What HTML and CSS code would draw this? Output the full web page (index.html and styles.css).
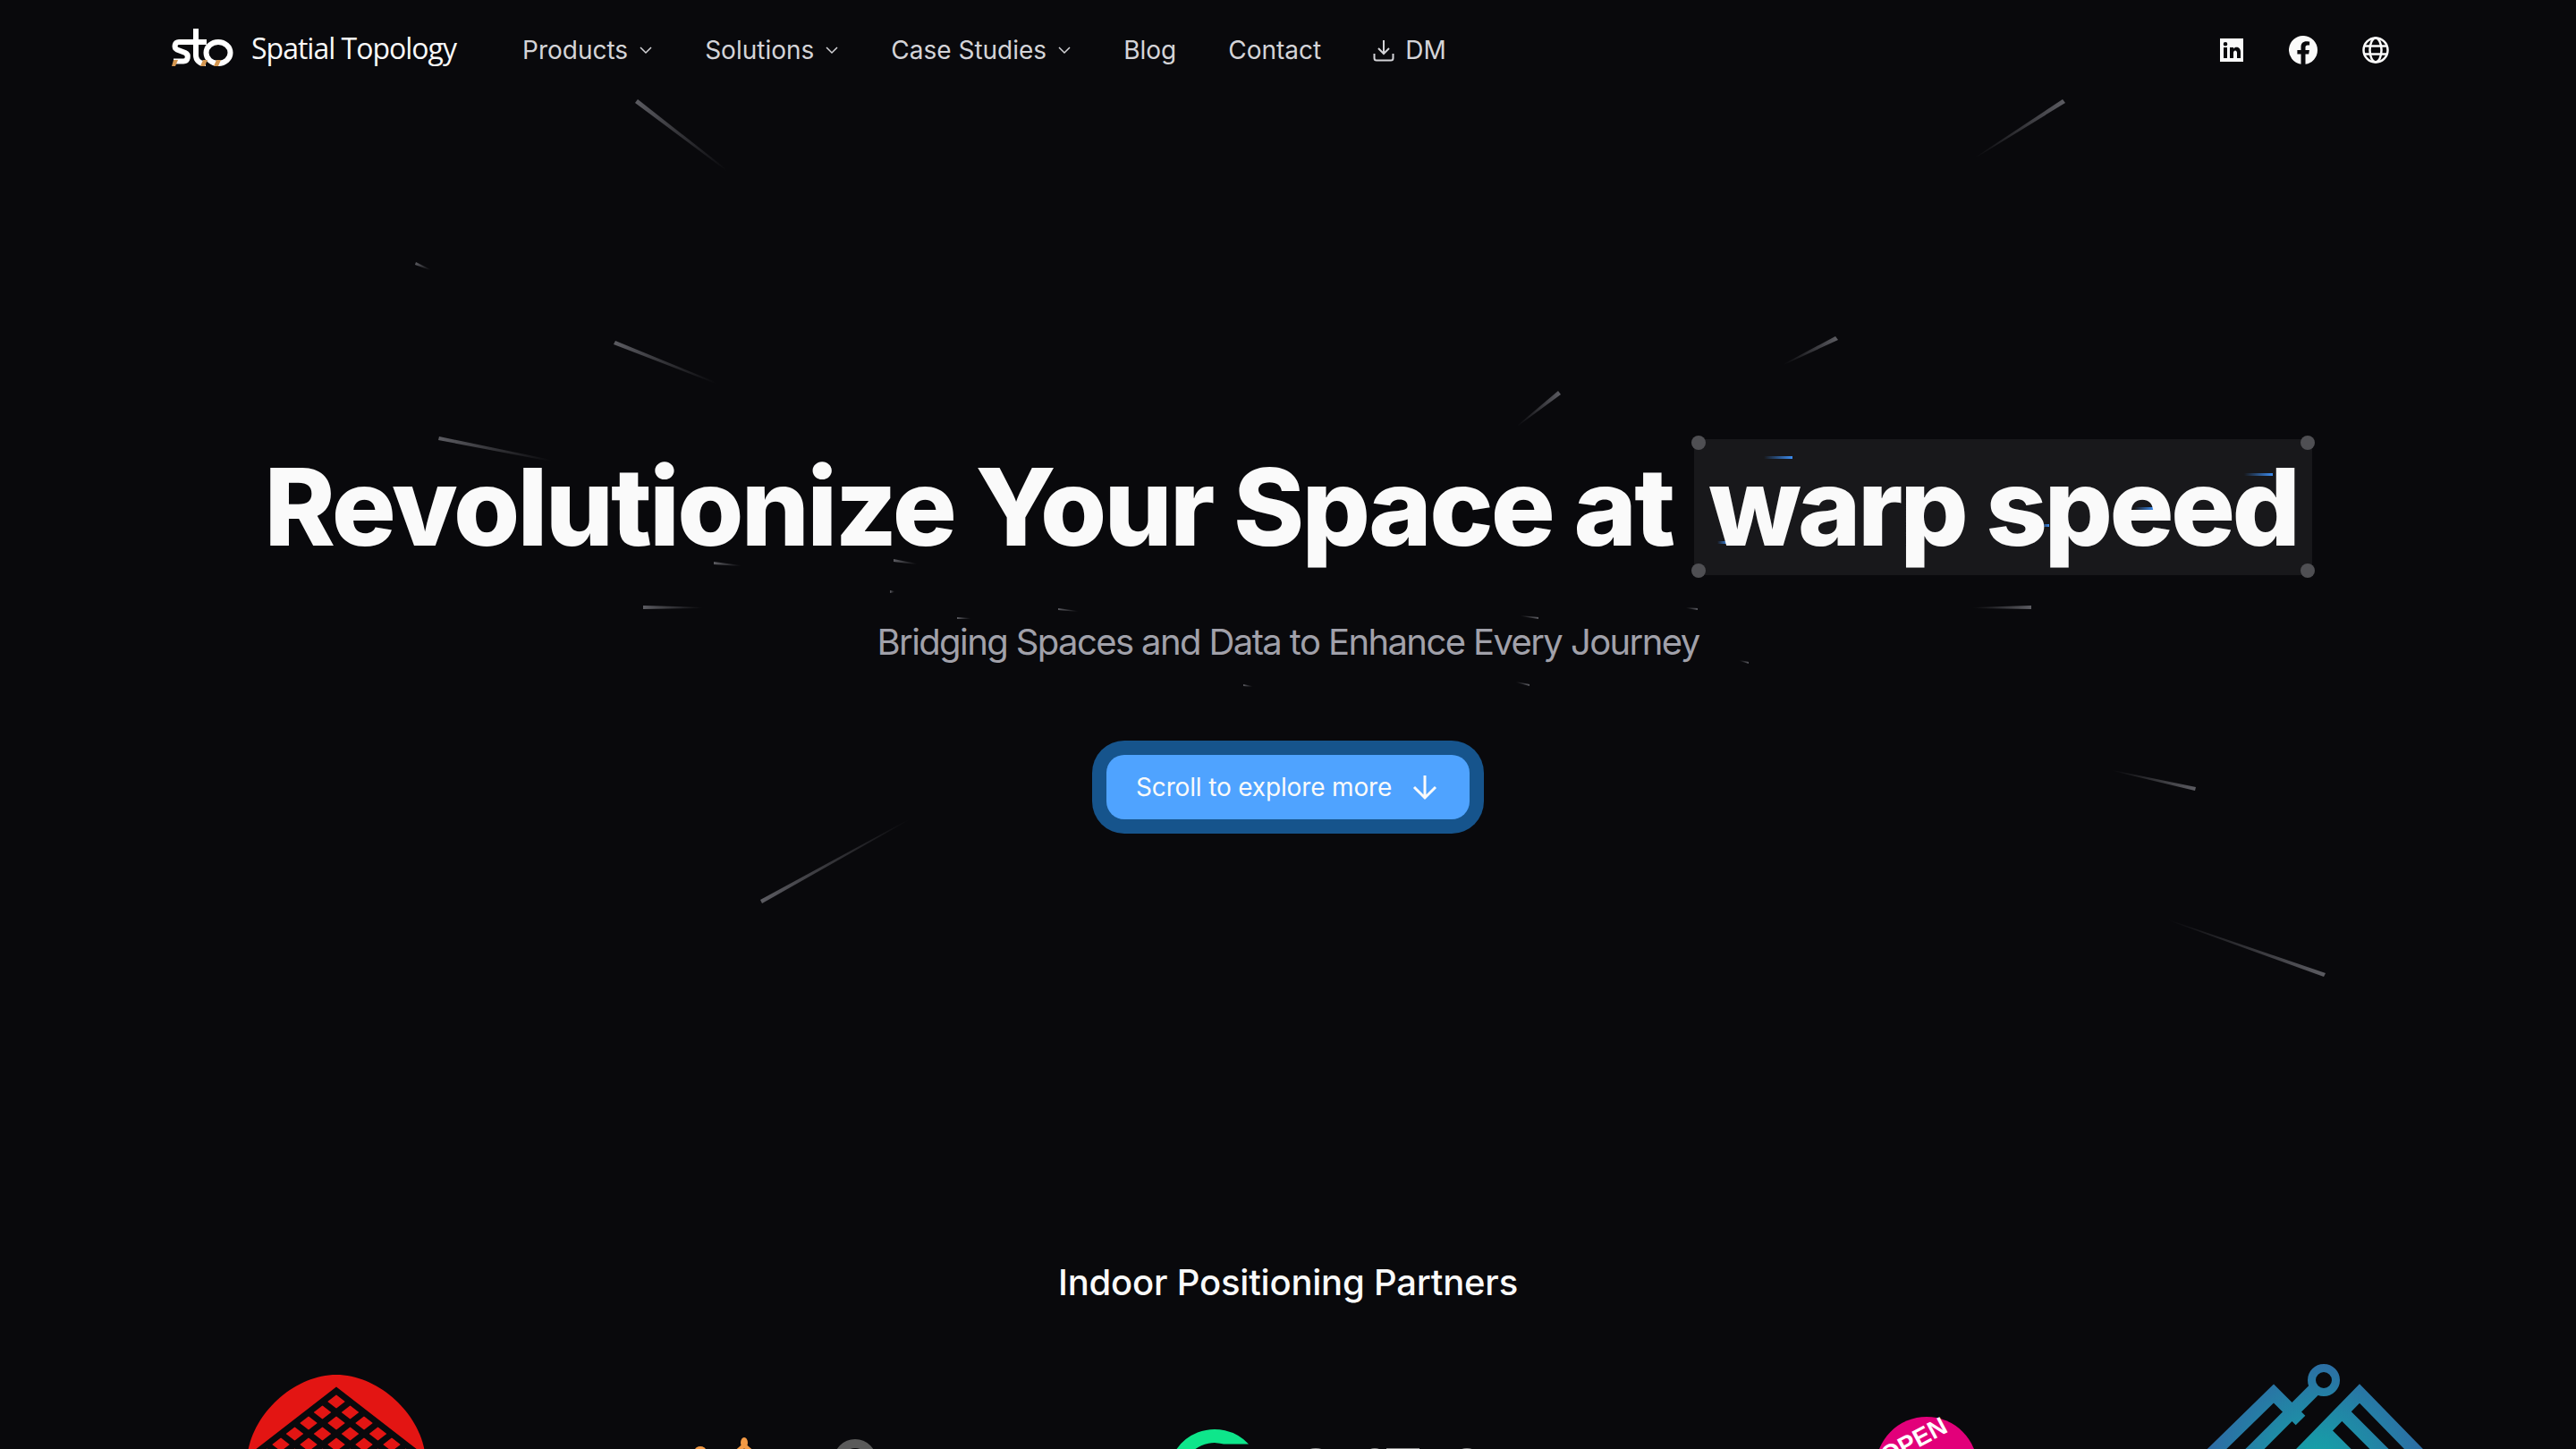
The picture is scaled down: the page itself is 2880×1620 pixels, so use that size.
FILE: index.html
```html
<!DOCTYPE html>
<html lang="en">
<head>
  <meta charset="UTF-8" />
  <meta name="viewport" content="width=device-width, initial-scale=1.0"/>
  <title>Spatial Topology</title>
  <link rel="stylesheet" href="styles.css">
</head>
<body>
  <svg class="streaks" width="2880" height="1620" viewBox="0 0 2880 1620">
    <defs>
      <linearGradient id="fadeL" x1="0" y1="0" x2="1" y2="0">
        <stop offset="0" stop-color="#5c5c62"/>
        <stop offset="1" stop-color="#5c5c62" stop-opacity="0"/>
      </linearGradient>
      <linearGradient id="fadeR" x1="1" y1="0" x2="0" y2="0">
        <stop offset="0" stop-color="#5c5c62"/>
        <stop offset="1" stop-color="#5c5c62" stop-opacity="0"/>
      </linearGradient>
      <linearGradient id="fadeBlue" x1="0" y1="0" x2="1" y2="0">
        <stop offset="0" stop-color="#3b8cf0" stop-opacity="0"/>
        <stop offset="1" stop-color="#3b8cf0"/>
      </linearGradient>
    </defs>
    <!-- left side, bright end on the left -->
    <g fill="url(#fadeL)">
      <polygon points="713,111 812,189 812,191 710,115"/>
      <polygon points="465,293 481,301 481,302 464,296"/>
      <polygon points="688,381 800,427 800,429 686,385"/>
      <polygon points="491,488 616,514 616,516 490,492"/>
      <polygon points="719,677 785,679 785,680 719,681"/>
      <polygon points="850,1006 1016,916 1016,917 852,1010"/>
      <polygon points="798,628 828,632 828,633 798,631"/>
      <polygon points="999,625 1025,630 1025,631 999,628"/>
      <polygon points="995,660 1000,661 1000,662 995,663"/>
      <polygon points="1183,680 1205,683 1205,684 1183,682"/>
      <polygon points="1390,765 1400,767 1400,768 1390,767"/>
      <polygon points="1070,690 1085,691 1085,692 1070,692"/>
    </g>
    <!-- right side, bright end on the right -->
    <g fill="url(#fadeR)">
      <polygon points="2306,111 2208,176 2208,177 2309,115"/>
      <polygon points="2052,376 1994,407 1994,408 2055,380"/>
      <polygon points="1742,437 1696,476 1696,477 1745,441"/>
      <polygon points="2271,677 2206,679 2206,680 2271,681"/>
      <polygon points="2455,880 2362,861 2362,862 2454,884"/>
      <polygon points="2600,1088 2424,1028 2424,1029 2598,1092"/>
      <polygon points="1955,740 1945,738 1945,739 1955,742"/>
      <polygon points="1710,765 1695,762 1695,763 1710,767"/>
      <polygon points="1720,690 1700,688 1700,689 1720,692"/>
      <polygon points="1898,680 1885,679 1885,680 1898,682"/>
    </g>
  </svg>

  <header class="topbar">
    <div class="nav-left">
      <a class="brand" href="#">
        <svg class="brand-mark" width="72" height="50" viewBox="0 0 72 50">
          <g fill="none" stroke="#fff" stroke-width="6">
            <path d="M23 16H10a4.500 4.500 0 0 0-2 8.500l9 3.500a5 5 0 0 1-2 9.500H4"/>
            <path d="M29 1v30a9 9 0 0 0 9 9h2M19 16h22"/>
            <ellipse cx="54" cy="28" rx="13.500" ry="12"/>
          </g>
          <path d="M4 36h5l-3 7H2zM37 36h5l-3 7h-5zM52 36h5l-3 7h-5z" fill="#d4964f"/>
        </svg>
        <span class="brand-name">Spatial Topology</span>
      </a>
      <nav class="menu">
        <a href="#">Products <svg class="chev" width="16" height="16" viewBox="0 0 16 16"><path d="M2 5l6 6 6-6"/></svg></a>
        <a href="#">Solutions <svg class="chev" width="16" height="16" viewBox="0 0 16 16"><path d="M2 5l6 6 6-6"/></svg></a>
        <a href="#">Case Studies <svg class="chev" width="16" height="16" viewBox="0 0 16 16"><path d="M2 5l6 6 6-6"/></svg></a>
        <a href="#">Blog</a>
        <a href="#">Contact</a>
        <a class="dm" href="#">
          <svg class="dl" width="24" height="26" viewBox="0 0 24 26"><path d="M12 2v15M6 11l6 6 6-6M1.500 17v5c0 1.500 1 2.500 2.500 2.500h16c1.500 0 2.500-1 2.500-2.500v-5"/></svg>
          DM
        </a>
      </nav>
    </div>
    <div class="socials">
      <svg width="28" height="28" viewBox="0 0 28 28"><path fill="#fafafa" fill-rule="evenodd" d="M1 1h26v26H1zM5 11v12h4V11zM7 5a2.300 2.300 0 1 0 0 4.600A2.300 2.300 0 0 0 7 5zM12 11v12h4v-6c0-3.500 4-3.500 4 0v6h4v-7c0-6-6-6.500-8-3.500V11z"/></svg>
      <svg width="32" height="32" viewBox="0 0 32 32"><path fill="#fafafa" d="M32 16a16 16 0 1 0-18.500 15.800V20.600H9.400V16h4.100v-3.500c0-4 2.400-6.200 6-6.200 1.800 0 3.600.3 3.600.3v3.900h-2c-2 0-2.600 1.200-2.600 2.500v3h4.400l-.7 4.600h-3.700v11.200A16 16 0 0 0 32 16z"/></svg>
      <svg class="globe" width="30" height="30" viewBox="0 0 30 30"><circle cx="15" cy="15" r="13.500"/><ellipse cx="15" cy="15" rx="6.500" ry="13.500"/><path d="M2 10.500h26M2 19.500h26"/></svg>
    </div>
  </header>

  <main class="hero">
    <h1 class="headline">Revolutionize Your Space at
      <span class="highlight">
        <svg class="blue-streaks" width="693" height="152" viewBox="0 0 693 152">
          <rect x="78" y="19" width="32" height="3" fill="url(#fadeBlue)"/>
          <rect x="615" y="38" width="32" height="3" fill="url(#fadeBlue)"/>
          <rect x="492" y="76" width="22" height="3" fill="url(#fadeBlue)"/>
          <rect x="387" y="95" width="10" height="3" fill="url(#fadeBlue)"/>
          <rect x="26" y="114" width="12" height="3" fill="url(#fadeBlue)"/>
        </svg>
        <i class="handle tl"></i><i class="handle tr"></i><i class="handle bl"></i><i class="handle br"></i>
        <span class="highlight-text">warp speed</span>
      </span>
    </h1>
    <p class="sub">Bridging Spaces and Data to Enhance Every Journey</p>
    <a class="cta" href="#">
      <span class="cta-inner">Scroll to explore more
        <svg class="arrow" width="30" height="30" viewBox="0 0 30 30"><path d="M15 2v25M3 15l12 12 12-12"/></svg>
      </span>
    </a>
  </main>

  <section class="partners">
    <h2>Indoor Positioning Partners</h2>
    <svg class="logos" width="2880" height="140" viewBox="0 1480 2880 140">
      <defs>
        <radialGradient id="mountain" gradientUnits="userSpaceOnUse" cx="2590" cy="1640" r="120">
          <stop offset="0" stop-color="#12a8a8"/>
          <stop offset="1" stop-color="#2d6ca4"/>
        </radialGradient>
      </defs>

      <!-- red pyramid -->
      <path d="M276 1636c0-50 50-99 100-99s100 49 100 99c0 30-20 44-100 44s-100-14-100-44z" fill="#e31513"/>
      <g stroke="#09090c" stroke-width="7" fill="none">
        <path d="M221 1675l155-120 155 120"/>
        <path d="M360.500 1567l155 120M345 1579l155 120M329.500 1591l155 120M314 1603l155 120M298.500 1615l155 120"/>
        <path d="M391.500 1567l-155 120M407 1579l-155 120M422.500 1591l-155 120M438 1603l-155 120M453.500 1615l-155 120"/>
      </g>

      <!-- orange and grey mark -->
      <ellipse cx="783" cy="1621" rx="6" ry="4" fill="#f39a45"/>
      <ellipse cx="832" cy="1613" rx="4" ry="6" fill="#f39a45"/>
      <path d="M832 1616l-9 8M832 1616l9 8" stroke="#f39a45" stroke-width="5" fill="none"/>
      <circle cx="956" cy="1633" r="19" fill="none" stroke="#5a5a5a" stroke-width="10"/>

      <!-- green ring -->
      <path d="M1306 1650A52 52 0 0 1 1396 1614.500L1368 1614.500A37 37 0 0 0 1321 1650Z" fill="#0ee68b"/>
      <g fill="#8c8c8c">
        <ellipse cx="1471" cy="1622" rx="9" ry="3"/>
        <ellipse cx="1537" cy="1622" rx="7" ry="3"/>
        <rect x="1550" y="1619" width="37" height="3"/>
        <ellipse cx="1640" cy="1622" rx="8" ry="3"/>
      </g>

      <!-- pink badge -->
      <circle cx="2154" cy="1641" r="57" fill="#e2007a"/>
      <text class="badge-text" x="2144" y="1619" transform="rotate(-28 2144 1619)">OPEN</text>

      <!-- blue mountains -->
      <g fill="none" stroke="url(#mountain)" stroke-width="15">
        <circle cx="2598" cy="1543" r="13.500" stroke-width="9"/>
        <path d="M2458 1640l84-82 30 30"/>
        <path d="M2590 1551l-80 80"/>
        <path d="M2558 1640l80-82 80 82"/>
        <path d="M2618 1578l50 50M2596 1598l32 32M2580 1640l22-26 24 26"/>
      </g>
    </svg>
  </section>
</body>
</html>
```
FILE: styles.css
```css
* { box-sizing: border-box; }
html, body { margin: 0; height: 1620px; overflow: hidden; }
body {
  background: #09090c;
  color: #fafafa;
  font-family: Inter, "Liberation Sans", sans-serif;
  position: relative;
}
a { color: inherit; text-decoration: none; }

.streaks { position: absolute; top: 0; left: 0; }

.topbar {
  height: 111px;
  padding: 0 209px 0 190px;
  display: flex;
  justify-content: space-between;
  align-items: center;
  position: relative;
}
.nav-left { display: flex; align-items: center; gap: 74px; }
.brand { display: flex; align-items: center; gap: 19px; }
.brand-name { font-family: "Open Sans", sans-serif; font-size: 32px; letter-spacing: -1px; padding-bottom: 4px; }
.menu { display: flex; align-items: center; gap: 58px; font-size: 28px; color: #d4d4d8; }
.menu a { display: flex; align-items: center; gap: 12px; }
.chev { fill: none; stroke: #d4d4d8; stroke-width: 1.5; }
.dl { fill: none; stroke: #d4d4d8; stroke-width: 2; }
.socials { display: flex; align-items: center; gap: 50px; }
.globe { fill: none; stroke: #fafafa; stroke-width: 2.5; }

.hero { position: relative; display: flex; flex-direction: column; align-items: center; padding-top: 380px; }
.headline {
  margin: 0;
  font-size: 120px;
  font-weight: 800;
  letter-spacing: -2.8px;
  line-height: 152px;
  display: flex;
  align-items: center;
  gap: 24px;
  white-space: nowrap;
}
.highlight { position: relative; display: block; padding: 0 16px; background: #18181b; height: 152px; letter-spacing: -3.5px; }
.highlight-text { position: relative; }
.blue-streaks { position: absolute; top: 0; left: 0; }
.handle { position: absolute; width: 16px; height: 16px; border-radius: 50%; background: #4f4f53; }
.tl { top: -4px; left: -3px; }
.tr { top: -4px; right: -3px; }
.bl { bottom: -3px; left: -3px; }
.br { bottom: -3px; right: -3px; }

.sub { margin: 47px 0 0; font-size: 40px; line-height: 56px; letter-spacing: -1.6px; color: #a1a1aa; }

.cta { margin-top: 82px; display: block; padding: 16px; background: #16548c; border-radius: 36px; }
.cta-inner {
  display: flex;
  align-items: center;
  gap: 22px;
  width: 406px;
  height: 72px;
  padding: 0 0 0 33px;
  background: #4fa3ff;
  border-radius: 20px;
  font-size: 28px;
  letter-spacing: -0.15px;
  white-space: nowrap;
  color: #fafafa;
}
.arrow { fill: none; stroke: #fafafa; stroke-width: 3; }

.partners { position: absolute; top: 1404px; left: 0; right: 0; }
.partners h2 { margin: 0; text-align: center; font-size: 40px; line-height: 60px; font-weight: 500; letter-spacing: -0.2px; }
.logos { position: absolute; top: 76px; left: 0; display: block; }
.badge-text { font-family: "Liberation Sans", sans-serif; font-size: 28px; font-weight: 700; fill: #fff; text-anchor: middle; }
```
